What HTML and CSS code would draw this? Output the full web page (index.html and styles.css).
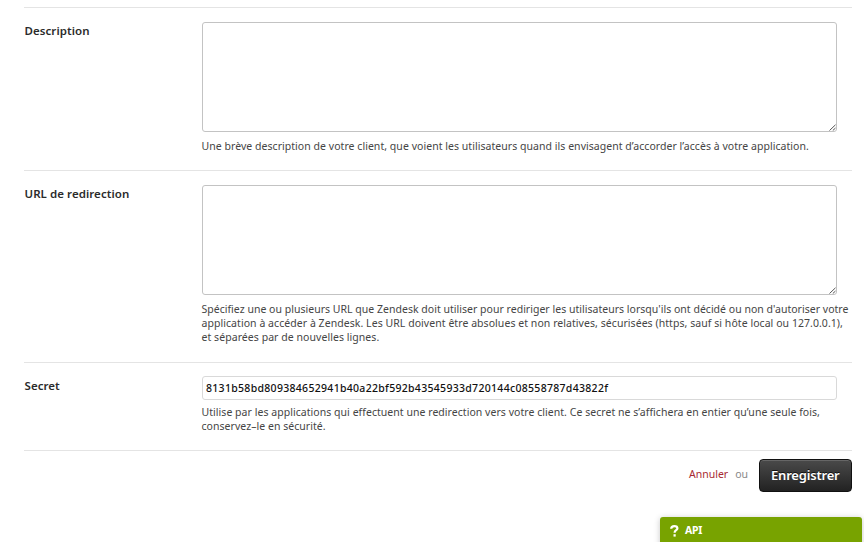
FILE: index.html
```html
<!DOCTYPE html>
<html lang="fr">
<head>
<meta charset="utf-8">
<title>Client OAuth</title>
<link rel="stylesheet" href="styles.css">
</head>
<body>
<form class="form">
  <section class="row row-description">
    <label class="label" for="description">Description</label>
    <div class="field">
      <div class="area-wrap"><textarea class="area" id="description"></textarea>
        <svg class="grip" viewBox="0 0 7 7"><path d="M0.5 6.5L6.5 0.8M3.8 6.5L6.5 4"/></svg></div>
      <p class="hint">Une brève description de votre client, que voient les utilisateurs quand ils envisagent d’accorder l’accès à votre application.</p>
    </div>
  </section>
  <section class="row row-url">
    <label class="label" for="redirect">URL de redirection</label>
    <div class="field">
      <div class="area-wrap"><textarea class="area" id="redirect"></textarea>
        <svg class="grip" viewBox="0 0 7 7"><path d="M0.5 6.5L6.5 0.8M3.8 6.5L6.5 4"/></svg></div>
      <p class="hint hint-url"><span class="tight">Spécifiez une ou plusieurs URL que Zendesk doit utiliser pour rediriger les utilisateurs lorsqu'ils ont décidé ou non d'autoriser votre</span><br>application à accéder à Zendesk. Les URL doivent être absolues et non relatives, sécurisées (https, sauf si hôte local ou 127.0.0.1),<br>et séparées par de nouvelles lignes.</p>
    </div>
  </section>
  <section class="row row-secret">
    <label class="label" for="secret">Secret</label>
    <div class="field">
      <input class="secret" id="secret" type="text" value="8131b58bd809384652941b40a22bf592b43545933d720144c08558787d43822f">
      <p class="hint hint-secret">Utilise par les applications qui effectuent une redirection vers votre client. Ce secret ne s’affichera en entier qu’une seule fois,<br>conservez–le en sécurité.</p>
    </div>
  </section>
  <footer class="actions">
    <a class="cancel">Annuler</a><span class="or">ou</span>
    <button class="save" type="button">Enregistrer</button>
  </footer>
</form>
<aside class="api"><svg class="help" viewBox="0 0 9 12"><path d="M1.2 3.8C1.3 1.9 2.6 1.2 4.3 1.2C6.2 1.2 7.4 2 7.4 3.5C7.4 5.3 4.6 5.2 4.6 7.7"/><path d="M4.6 9.2V11.6"/></svg><span class="api-text">API</span></aside>
</body>
</html>
```

FILE: styles.css
```css
* { box-sizing: border-box; }
body {
  margin: 0;
  height: 542px;
  overflow: hidden;
  position: relative;
  background: #fff;
  font-family: "Noto Sans", "Open Sans", sans-serif;
  font-size: 10.5px;
  color: #454545;
}
.form { margin: 6.5px 12px 0 24px; }
.row {
  display: grid;
  grid-template-columns: 177.5px 1fr;
  border-top: 1px solid #e4e4e4;
  padding-top: 14.5px;
}
.row-description { height: 163px; }
.row-url { height: 192px; }
.row-secret { height: 88.5px; padding-top: 13.5px; }
.label {
  font-weight: 600;
  font-size: 11.5px;
  line-height: 16px;
  letter-spacing: 0.06px;
  padding: 1px 0 0 0.5px;
  color: #2b2b2b;
}
.row-secret .label { padding-top: 2px; }
.area-wrap { position: relative; width: 635.5px; height: 110px; }
.area {
  display: block;
  width: 635.5px;
  height: 110px;
  margin: 0;
  border: 1px solid #c3c3c3;
  border-radius: 3px;
  background: #fff;
  resize: none;
  outline: 0;
}
.grip {
  position: absolute;
  right: 1px;
  bottom: 1px;
  width: 7px;
  height: 7px;
  fill: none;
  stroke: #555;
  stroke-width: 1;
}
.hint {
  margin: 6.5px 0 0;
  line-height: 14.4px;
  white-space: nowrap;
  letter-spacing: 0.043px;
}
.hint-url { letter-spacing: 0.055px; }
.tight { letter-spacing: 0.02px; }
.secret {
  display: block;
  width: 635.5px;
  height: 24px;
  border: 1px solid #d9d9d9;
  border-radius: 3px;
  padding: 0 4px 1px 3.5px;
  font: 500 10.5px "Noto Sans", sans-serif;
  letter-spacing: 0.3px;
  color: #111;
}
.hint-secret { margin-top: 4.5px; }
.actions {
  display: flex;
  justify-content: flex-end;
  align-items: flex-start;
  border-top: 1px solid #e4e4e4;
  padding-top: 8px;
}
.cancel, .or { line-height: 16px; padding-top: 7px; }
.cancel { color: #a82a32; }
.or { color: #888; margin: 0 10.5px 0 7px; }
.save {
  width: 93.5px;
  height: 33px;
  border: 1px solid #111;
  border-radius: 4px;
  padding: 0 0 1px;
  background: linear-gradient(#4a4a4a, #222);
  box-shadow: inset 0 1px 0 #666;
  color: #fff;
  font: 600 13px "Noto Sans", sans-serif;
  letter-spacing: -0.2px;
  text-shadow: 0 -1px 0 #111;
}
.api {
  position: absolute;
  left: 660px;
  top: 517px;
  width: 202px;
  height: 30px;
  display: flex;
  padding: 5px 10px;
  background: #78a300;
  border-radius: 3px 3px 0 0;
  box-shadow: 0 1px 6px rgba(0, 0, 0, 0.22);
  color: #fff;
}
.help { width: 9px; height: 12px; margin-top: 3px; fill: none; stroke: #fff; stroke-width: 2.2; }
.api-text { font-weight: 700; font-size: 10.5px; line-height: 16px; margin-left: 6px; letter-spacing: -0.3px; }
```
